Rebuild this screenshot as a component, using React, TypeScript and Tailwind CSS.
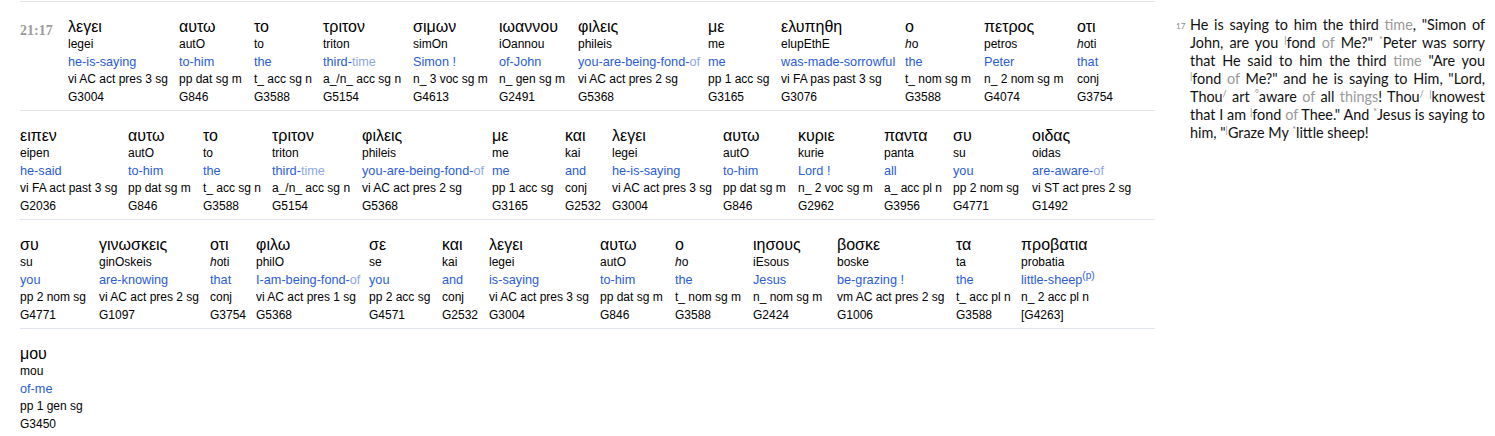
import type { ReactNode } from 'react';

type Word = {
  w: string;
  g: string;
  t: ReactNode;
  e: ReactNode;
  m: string;
  s: string;
};

const dim = (s: string) => <span className="text-[#8ea8e6]">{s}</span>;

const ROW1: Word[] = [
  { w: 'w-[111px]', g: 'λεγει', t: 'legei', e: 'he-is-saying', m: 'vi AC act pres 3 sg', s: 'G3004' },
  { w: 'w-[75px]', g: 'αυτω', t: 'autO', e: 'to-him', m: 'pp dat sg m', s: 'G846' },
  { w: 'w-[69px]', g: 'το', t: 'to', e: 'the', m: 't_ acc sg n', s: 'G3588' },
  { w: 'w-[90px]', g: 'τριτον', t: 'triton', e: <>third-{dim('time')}</>, m: 'a_/n_ acc sg n', s: 'G5154' },
  { w: 'w-[86px]', g: 'σιμων', t: 'simOn', e: 'Simon !', m: 'n_ 3 voc sg m', s: 'G4613' },
  { w: 'w-[79px]', g: 'ιωαννου', t: 'iOannou', e: 'of-John', m: 'n_ gen sg m', s: 'G2491' },
  { w: 'w-[130px]', g: 'φιλεις', t: 'phileis', e: <>you-are-being-fond-{dim('of')}</>, m: 'vi AC act pres 2 sg', s: 'G5368' },
  { w: 'w-[73px]', g: 'με', t: 'me', e: 'me', m: 'pp 1 acc sg', s: 'G3165' },
  { w: 'w-[124px]', g: 'ελυπηθη', t: 'elupEthE', e: 'was-made-sorrowful', m: 'vi FA pas past 3 sg', s: 'G3076' },
  { w: 'w-[79px]', g: 'ο', t: <><i>h</i>o</>, e: 'the', m: 't_ nom sg m', s: 'G3588' },
  { w: 'w-[93px]', g: 'πετρος', t: 'petros', e: 'Peter', m: 'n_ 2 nom sg m', s: 'G4074' },
  { w: 'w-[58px]', g: 'οτι', t: <><i>h</i>oti</>, e: 'that', m: 'conj', s: 'G3754' },
];

const ROW2: Word[] = [
  { w: 'w-[108px]', g: 'ειπεν', t: 'eipen', e: 'he-said', m: 'vi FA act past 3 sg', s: 'G2036' },
  { w: 'w-[75px]', g: 'αυτω', t: 'autO', e: 'to-him', m: 'pp dat sg m', s: 'G846' },
  { w: 'w-[69px]', g: 'το', t: 'to', e: 'the', m: 't_ acc sg n', s: 'G3588' },
  { w: 'w-[90px]', g: 'τριτον', t: 'triton', e: <>third-{dim('time')}</>, m: 'a_/n_ acc sg n', s: 'G5154' },
  { w: 'w-[130px]', g: 'φιλεις', t: 'phileis', e: <>you-are-being-fond-{dim('of')}</>, m: 'vi AC act pres 2 sg', s: 'G5368' },
  { w: 'w-[73px]', g: 'με', t: 'me', e: 'me', m: 'pp 1 acc sg', s: 'G3165' },
  { w: 'w-[47px]', g: 'και', t: 'kai', e: 'and', m: 'conj', s: 'G2532' },
  { w: 'w-[111px]', g: 'λεγει', t: 'legei', e: 'he-is-saying', m: 'vi AC act pres 3 sg', s: 'G3004' },
  { w: 'w-[75px]', g: 'αυτω', t: 'autO', e: 'to-him', m: 'pp dat sg m', s: 'G846' },
  { w: 'w-[86px]', g: 'κυριε', t: 'kurie', e: 'Lord !', m: 'n_ 2 voc sg m', s: 'G2962' },
  { w: 'w-[69px]', g: 'παντα', t: 'panta', e: 'all', m: 'a_ acc pl n', s: 'G3956' },
  { w: 'w-[79px]', g: 'συ', t: 'su', e: 'you', m: 'pp 2 nom sg', s: 'G4771' },
  { w: 'w-[103px]', g: 'οιδας', t: 'oidas', e: <>are-aware-{dim('of')}</>, m: 'vi ST act pres 2 sg', s: 'G1492' },
];

const ROW3: Word[] = [
  { w: 'w-[79px]', g: 'συ', t: 'su', e: 'you', m: 'pp 2 nom sg', s: 'G4771' },
  { w: 'w-[111px]', g: 'γινωσκεις', t: 'ginOskeis', e: 'are-knowing', m: 'vi AC act pres 2 sg', s: 'G1097' },
  { w: 'w-[46px]', g: 'οτι', t: <><i>h</i>oti</>, e: 'that', m: 'conj', s: 'G3754' },
  { w: 'w-[113px]', g: 'φιλω', t: 'philO', e: <>I-am-being-fond-{dim('of')}</>, m: 'vi AC act pres 1 sg', s: 'G5368' },
  { w: 'w-[73px]', g: 'σε', t: 'se', e: 'you', m: 'pp 2 acc sg', s: 'G4571' },
  { w: 'w-[47px]', g: 'και', t: 'kai', e: 'and', m: 'conj', s: 'G2532' },
  { w: 'w-[111px]', g: 'λεγει', t: 'legei', e: 'is-saying', m: 'vi AC act pres 3 sg', s: 'G3004' },
  { w: 'w-[75px]', g: 'αυτω', t: 'autO', e: 'to-him', m: 'pp dat sg m', s: 'G846' },
  { w: 'w-[78px]', g: 'ο', t: <><i>h</i>o</>, e: 'the', m: 't_ nom sg m', s: 'G3588' },
  { w: 'w-[84px]', g: 'ιησους', t: 'iEsous', e: 'Jesus', m: 'n_ nom sg m', s: 'G2424' },
  { w: 'w-[119px]', g: 'βοσκε', t: 'boske', e: 'be-grazing !', m: 'vm AC act pres 2 sg', s: 'G1006' },
  { w: 'w-[65px]', g: 'τα', t: 'ta', e: 'the', m: 't_ acc pl n', s: 'G3588' },
  { w: 'w-[114px]', g: 'προβατια', t: 'probatia', e: <>little-sheep<sup className="text-[10px] leading-none">(p)</sup></>, m: 'n_ 2 acc pl n', s: '[G4263]' },
];

const ROW4: Word[] = [
  { w: 'w-[100px]', g: 'μου', t: 'mou', e: 'of-me', m: 'pp 1 gen sg', s: 'G3450' },
];

const Mark = ({ c }: { c: string }) => (
  <span className="relative top-[-5px] text-[9px] leading-none text-[#8a8a8a]">{c}</span>
);
const Gray = ({ c }: { c: string }) => <span className="text-[#9a9a9a]">{c}</span>;

const LINES: ReactNode[] = [
  <>He is saying to him the third <Gray c="time" />, "Simon of</>,
  <>John, are you <Mark c="|" />fond <Gray c="of" /> Me?" <Mark c="*" />Peter was sorry</>,
  <>that He said to him the third <Gray c="time" /> "Are you</>,
  <><Mark c="|" />fond <Gray c="of" /> Me?" and he is saying to Him, "Lord,</>,
  <>Thou<Mark c="/" /> art <Mark c="°" />aware <Gray c="of" /> all <Gray c="things" />! Thou<Mark c="/" /> <Mark c="|" />knowest</>,
  <>that I am <Mark c="|" />fond <Gray c="of" /> Thee." And <Mark c="*" />Jesus is saying to</>,
];

function WordCol({ word }: { word: Word }) {
  return (
    <div className={`${word.w} shrink-0 whitespace-nowrap text-xs leading-[17.5px] text-black`}>
      <div className="text-[16px] leading-[18px]">{word.g}</div>
      <div>{word.t}</div>
      <div className="text-[12.7px] text-[#2a5cd8]">{word.e}</div>
      <div>{word.m}</div>
      <div>{word.s}</div>
    </div>
  );
}

export default function App() {
  return (
    <div className="flex w-[1495px] h-[436px] bg-white overflow-hidden [font-family:'Liberation_Sans',Arial,sans-serif]">
      <div className="w-[1135px] ml-5 shrink-0 mt-px">
        <div className="flex h-[109px] border-t border-[#e0e4f2] pt-4">
          <div className="w-12 shrink-0 pt-[2px] text-[14px] font-bold text-[#9c9c9c] [font-family:'Liberation_Serif',serif]">21:17</div>
          {ROW1.map((w) => <WordCol key={w.s + w.g} word={w} />)}
        </div>
        <div className="flex h-[109px] border-t border-[#e0e4f2] pt-4">
          {ROW2.map((w) => <WordCol key={w.s + w.g} word={w} />)}
        </div>
        <div className="flex h-[109px] border-t border-[#e0e4f2] pt-4">
          {ROW3.map((w) => <WordCol key={w.s + w.g} word={w} />)}
        </div>
        <div className="flex h-[108px] border-t border-[#e0e4f2] pt-4">
          {ROW4.map((w) => <WordCol key={w.s + w.g} word={w} />)}
        </div>
      </div>
      <div className="relative ml-[35px] mt-4 w-[295px] text-[14.4px] leading-[18px] text-[#111] [font-family:Lato,sans-serif]">
        <sup className="absolute left-[-14px] top-[6px] text-[8px] leading-none text-[#8a8a8a]">17</sup>
        {LINES.map((l, i) => (
          <div key={i} className="whitespace-nowrap text-justify [text-align-last:justify]">{l}</div>
        ))}
        <div>him, "<Mark c="|" />Graze My <Mark c="*" />little sheep!</div>
      </div>
    </div>
  );
}
